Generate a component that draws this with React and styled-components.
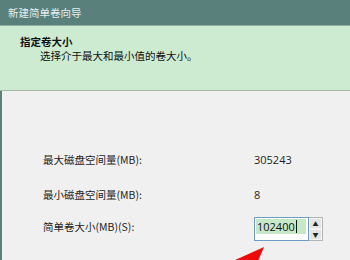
import React from 'react';
import styled, { createGlobalStyle } from 'styled-components';

const GlobalStyle = createGlobalStyle`
  body {
    margin: 0;
    background: #f0f0f0;
    overflow: hidden;
    font-family: "Noto Sans CJK SC", "Open Sans", sans-serif;
  }
`;

const Window = styled.div`
  position: relative;
  width: 350px;
  height: 260px;
  display: flex;
  flex-direction: column;
  overflow: hidden;
`;

const TitleBar = styled.div`
  height: 25px;
  flex: none;
  display: flex;
  align-items: center;
  padding-left: 8px;
  background: #5a807c;
  color: #e4eeec;
  font-size: 10.5px;
`;

const Header = styled.div`
  height: 66px;
  flex: none;
  box-sizing: border-box;
  padding: 9px 0 0 20px;
  background: #cdebd0;
  border-top: 1px solid #8fb0a6;
  border-bottom: 1px solid #a4b8ae;
  color: #111;
`;

const HeaderTitle = styled.div`
  font-size: 10.5px;
  font-weight: bold;
  line-height: 14px;
`;

const HeaderText = styled.div`
  font-size: 10.5px;
  line-height: 13px;
  padding-left: 20px;
`;

const Body = styled.div`
  flex: 1;
  background: #f0f0f0;
  border-left: 2px solid #5e807c;
  padding: 56px 0 0 41px;
`;

const Form = styled.div`
  display: grid;
  grid-template-columns: 211px auto;
  grid-auto-rows: 24px;
  row-gap: 11px;
  align-items: center;
  font-size: 10.5px;
  color: #1e1e1e;
`;

const Label = styled.div`
  margin-top: ${p => (p.$raise ? '-6px' : '0')};
`;

const Value = styled.div`
  font-family: "Open Sans", sans-serif;
  font-size: 11px;
`;

const Spin = styled.div`
  display: flex;
  height: 24px;
`;

const Input = styled.div`
  position: relative;
  width: 55px;
  height: 24px;
  box-sizing: border-box;
  border: 1px solid #6f9cc4;
  background: #fff;
  padding: 1px 2px 0 1px;
`;

const Selected = styled.div`
  height: 15px;
  background: #c6e8c9;
  display: flex;
  align-items: center;
  font-family: "Open Sans", sans-serif;
  font-size: 11px;
  color: #111;
  padding-left: 1px;
`;

const Caret = styled.span`
  display: inline-block;
  width: 1px;
  height: 13px;
  background: #111;
  margin-left: 1px;
`;

const Buttons = styled.div`
  width: 14px;
  box-sizing: border-box;
  border: 1px solid #b4b4b4;
  border-left: none;
  display: flex;
  flex-direction: column;
  background: #f4f4f4;
`;

const Btn = styled.div`
  flex: 1;
  display: flex;
  align-items: center;
  justify-content: center;
  background: #e4e4e4;
  margin: 1px;
  font-size: 6px;
  color: #222;
`;

const Arrow = styled.svg`
  position: absolute;
  left: 0;
  top: 0;
  pointer-events: none;
`;

export default function App() {
  return (
    <>
      <GlobalStyle />
      <Window>
        <TitleBar>新建简单卷向导</TitleBar>
        <Header>
          <HeaderTitle>指定卷大小</HeaderTitle>
          <HeaderText>选择介于最大和最小值的卷大小。</HeaderText>
        </Header>
        <Body>
          <Form>
            <Label>最大磁盘空间量(MB):</Label>
            <Value>305243</Value>
            <Label>最小磁盘空间量(MB):</Label>
            <Value>8</Value>
            <Label $raise>简单卷大小(MB)(S):</Label>
            <Spin>
              <Input>
                <Selected>
                  102400<Caret />
                </Selected>
              </Input>
              <Buttons>
                <Btn>▲</Btn>
                <Btn>▼</Btn>
              </Buttons>
            </Spin>
          </Form>
        </Body>
        <Arrow width="350" height="260" viewBox="0 0 350 260">
          <polygon points="264,247 233,261 258,261" fill="#ee0a0a" />
        </Arrow>
      </Window>
    </>
  );
}
